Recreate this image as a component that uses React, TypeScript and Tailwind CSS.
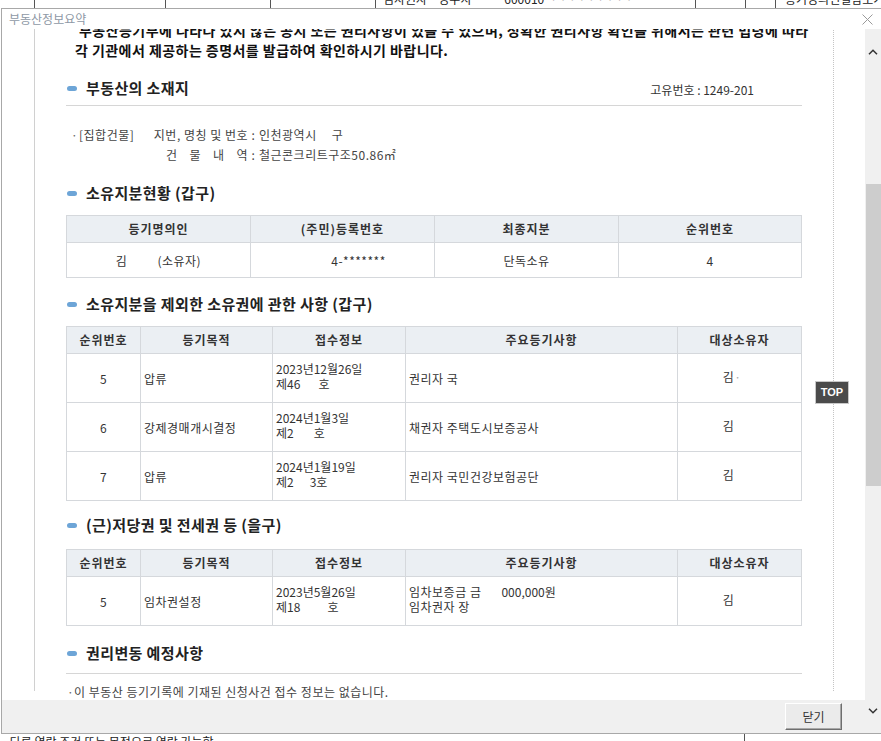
import React from "react";

const Chev = ({ up }: { up?: boolean }) => (
  <svg width="10" height="6" viewBox="0 0 10 6" className="block">
    <path d={up ? "M1 5.2 L5 1.2 L9 5.2" : "M1 0.8 L5 4.8 L9 0.8"} fill="none" stroke="#333" strokeWidth="1.5" />
  </svg>
);

function Heading({ children, right }: { children: React.ReactNode; right?: React.ReactNode }) {
  return (
    <div className="flex h-[20px] items-center">
      <span className="ml-[1px] h-[5px] w-[10px] shrink-0 rounded-full bg-[#6da5d7]" />
      <span className="ml-[9px] whitespace-nowrap text-[15px] font-bold leading-[20px] tracking-[0.4px] text-[#222]">
        {children}
      </span>
      {right}
    </div>
  );
}

const th =
  "flex h-[27px] items-center justify-center border-b border-r border-[#d5d8dc] bg-[#ebeff3] text-[12px] font-bold tracking-[1px] text-[#333]";
const td =
  "flex items-center border-b border-r border-[#d5d8dc] text-[12px] leading-[15px] tracking-[0.5px] text-[#333]";

type Row = {
  no: string;
  purpose: string;
  date: string;
  num: [string, number, string];
  info: React.ReactNode;
  owner: React.ReactNode;
};

function RightsTable({ rows }: { rows: Row[] }) {
  return (
    <div className="grid grid-cols-[74px_132px_133px_272px_124px] border-l border-t border-[#d5d8dc]">
      <div className={th}>순위번호</div>
      <div className={th}>등기목적</div>
      <div className={th}>접수정보</div>
      <div className={th}>주요등기사항</div>
      <div className={th}>대상소유자</div>
      {rows.map((r, i) => (
        <React.Fragment key={i}>
          <div className={`${td} h-[49px] justify-center`}>{r.no}</div>
          <div className={`${td} h-[49px] pl-[3px]`}>{r.purpose}</div>
          <div className={`${td} h-[49px] pl-[3px]`}>
            <div className="-mt-[4px] tracking-[0px]">
              <div>{r.date}</div>
              <div className="flex">
                <span>{r.num[0]}</span>
                <span className="inline-block" style={{ width: r.num[1] }} />
                <span>{r.num[2]}</span>
              </div>
            </div>
          </div>
          <div className={`${td} h-[49px] pl-[3px]`}>{r.info}</div>
          <div className={`${td} h-[49px] justify-center`}>{r.owner}</div>
        </React.Fragment>
      ))}
    </div>
  );
}

const Owner = ({ dot }: { dot?: boolean }) => (
  <span className="-mt-[4px] flex">
    <span>김</span>
    <span className="inline-block w-[22px] text-[#aaa]">{dot ? "·" : ""}</span>
  </span>
);

export default function App() {
  return (
    <div className="relative h-[741px] w-[881px] overflow-hidden bg-white font-['Noto_Sans_CJK_KR','Noto_Sans',sans-serif] text-[#333]">
      {/* background page strip (top) */}
      <div className="flex h-[8px] overflow-hidden text-[12px] leading-[16px] text-[#222]">
        <div className="w-[34px] shrink-0" />
        <div className="w-[131px] shrink-0 border-l border-[#555]" />
        <div className="w-[105px] shrink-0 border-l border-[#555]" />
        <div className="w-[105px] shrink-0 border-l border-[#555]" />
        <div className="w-[320px] shrink-0 border-l border-[#555] pl-[7px]">
          <div className="-mt-[9px] flex whitespace-nowrap">
            <span>임차권자</span>
            <span className="ml-[11px]">정수치</span>
            <span className="ml-[33px]">600010</span>
            <span className="ml-[6px] text-[#999]">· · · · · · · · ·</span>
          </div>
        </div>
        <div className="w-[50px] shrink-0 border-l border-[#555]" />
        <div className="w-[30px] shrink-0 border-l border-[#555]" />
        <div className="flex-1 border-l border-[#555] pl-[9px]">
          <div className="-mt-[9px] whitespace-nowrap">등기명의인열람보기</div>
        </div>
      </div>

      {/* dialog */}
      <div className="ml-[1px] flex h-[726px] flex-col border-b border-l border-t border-[#a8a8a8] bg-white">
        {/* title bar */}
        <div className="flex h-[20px] shrink-0 items-center">
          <span className="ml-[7px] text-[12px] leading-[20px] text-[#8e98a5]">부동산정보요약</span>
          <svg width="11" height="11" viewBox="0 0 11 11" className="ml-auto mr-[8px] mt-[1px]">
            <path d="M0.5 0.5 L10.5 10.5 M10.5 0.5 L0.5 10.5" stroke="#9a9a9a" strokeWidth="1" fill="none" />
          </svg>
        </div>

        {/* body */}
        <div className="flex min-h-0 flex-1">
          <div className="flex w-[863px] shrink-0 flex-col">
            {/* scrolled content */}
            <div className="h-[671px] shrink-0 overflow-hidden">
              <div className="ml-[32px] h-full w-[800px] border-l border-r border-[#d0d0d0] border-r-[#c4c4c4] [border-right-style:dotted] px-[31px]">
                <div className="-mt-[9px] text-[14px] font-bold leading-[20px] tracking-[0.45px] text-[#111]">
                  <div className="whitespace-nowrap pl-[13px]">
                    부동산등기부에 나타나 있지 않은 공시 또는 권리사항이 있을 수 있으며, 정확한 권리사항 확인을 위해서는 관련 법령에 따라
                  </div>
                  <div className="whitespace-nowrap pl-[9px]">
                    각 기관에서 제공하는 증명서를 발급하여 확인하시기 바랍니다.
                  </div>
                </div>

                <div className="mt-[18px]">
                  <Heading
                    right={
                      <span className="ml-auto mr-[48px] mt-[4px] text-[12px] leading-[20px] text-[#333]">
                        고유번호 : 1249-201
                      </span>
                    }
                  >
                    부동산의 소재지
                  </Heading>
                </div>
                <div className="mt-[7px] h-[1px] bg-[#d6d6d6]" />

                <div className="mt-[19px] text-[12px] leading-[20px] tracking-[0.5px] text-[#444]">
                  <div className="flex">
                    <div className="flex w-[81px] shrink-0 pl-[5px]">
                      <span className="w-[8px] text-[#666]">·</span>
                      <span>[집합건물]</span>
                    </div>
                    <div className="flex w-[101px] shrink-0 justify-end whitespace-nowrap">지번, 명칭 및 번호</div>
                    <div className="w-[11px] shrink-0 text-center">:</div>
                    <div className="flex">
                      <span>인천광역시</span>
                      <span className="inline-block w-[15px]" />
                      <span>구</span>
                    </div>
                  </div>
                  <div className="flex">
                    <div className="w-[81px] shrink-0" />
                    <div className="flex w-[101px] shrink-0 justify-end">
                      <div className="flex w-[82px] justify-between">
                        <span>건</span>
                        <span>물</span>
                        <span>내</span>
                        <span>역</span>
                      </div>
                    </div>
                    <div className="w-[11px] shrink-0 text-center">:</div>
                    <div>철근콘크리트구조50.86㎡</div>
                  </div>
                </div>

                <div className="mt-[18px]">
                  <Heading>소유지분현황 (갑구)</Heading>
                </div>
                <div className="mt-[12px] grid grid-cols-[184px_184px_184px_183px] border-l border-t border-[#d5d8dc]">
                  <div className={th}>등기명의인</div>
                  <div className={th}>(주민)등록번호</div>
                  <div className={th}>최종지분</div>
                  <div className={th}>순위번호</div>
                  <div className={`${td} h-[35px] justify-center`}>
                    <span className="flex">
                      <span>김</span>
                      <span className="inline-block w-[30px]" />
                      <span>(소유자)</span>
                    </span>
                  </div>
                  <div className={`${td} h-[35px] justify-center`}>
                    <span className="flex">
                      <span className="inline-block w-[32px]" />
                      <span>4-*******</span>
                    </span>
                  </div>
                  <div className={`${td} h-[35px] justify-center`}>단독소유</div>
                  <div className={`${td} h-[35px] justify-center`}>4</div>
                </div>

                <div className="mt-[16px]">
                  <Heading>소유지분을 제외한 소유권에 관한 사항 (갑구)</Heading>
                </div>
                <div className="mt-[12px]">
                  <RightsTable
                    rows={[
                      {
                        no: "5",
                        purpose: "압류",
                        date: "2023년12월26일",
                        num: ["제46", 18, "호"],
                        info: "권리자 국",
                        owner: <Owner dot />,
                      },
                      {
                        no: "6",
                        purpose: "강제경매개시결정",
                        date: "2024년1월3일",
                        num: ["제2", 20, "호"],
                        info: "채권자 주택도시보증공사",
                        owner: <Owner />,
                      },
                      {
                        no: "7",
                        purpose: "압류",
                        date: "2024년1월19일",
                        num: ["제2", 16, "3호"],
                        info: "권리자 국민건강보험공단",
                        owner: <Owner />,
                      },
                    ]}
                  />
                </div>

                <div className="mt-[14px]">
                  <Heading>(근)저당권 및 전세권 등 (을구)</Heading>
                </div>
                <div className="mt-[14px]">
                  <RightsTable
                    rows={[
                      {
                        no: "5",
                        purpose: "임차권설정",
                        date: "2023년5월26일",
                        num: ["제18", 27, "호"],
                        info: (
                          <div className="-mt-[4px]">
                            <div className="flex">
                              <span>임차보증금 금</span>
                              <span className="inline-block w-[20px]" />
                              <span className="tracking-[0px]">000,000원</span>
                            </div>
                            <div>임차권자 장</div>
                          </div>
                        ),
                        owner: <Owner />,
                      },
                    ]}
                  />
                </div>

                <div className="mt-[17px]">
                  <Heading>권리변동 예정사항</Heading>
                </div>
                <div className="mt-[10px] h-[1px] bg-[#d6d6d6]" />
                <div className="mt-[8px] flex text-[12px] leading-[20px] tracking-[0.5px] text-[#444]">
                  <span className="w-[8px] pl-[1px] text-[#666]">·</span>
                  <span>이 부동산 등기기록에 기재된 신청사건 접수 정보는 없습니다.</span>
                </div>
              </div>
            </div>

            {/* footer */}
            <div className="flex h-[33px] shrink-0 items-start justify-end bg-[#f0f0f0] pr-[23px] pt-[3px]">
              <button className="flex h-[27px] w-[57px] items-center justify-center border border-b-[#6e6e6e] border-l-white border-r-[#6e6e6e] border-t-white bg-[#ebebeb] text-[12px] text-[#333] shadow-[inset_-1px_-1px_0_#a8a8a8]">
                닫기
              </button>
            </div>
          </div>

          {/* scrollbar */}
          <div className="flex w-[16px] shrink-0 flex-col bg-[#f0f0f0]">
            <div className="flex h-[46px] shrink-0 justify-center">
              <div className="mt-[20px]">
                <Chev up />
              </div>
            </div>
            <div className="ml-[1px] mt-[109px] h-[302px] shrink-0 bg-[#cdcdcd]" />
            <div className="flex-1" />
            <div className="flex h-[33px] shrink-0 justify-center">
              <div className="mt-[8px]">
                <Chev />
              </div>
            </div>
          </div>
        </div>
      </div>

      {/* background page strip (bottom) */}
      <div className="flex h-[7px] overflow-hidden text-[12px] leading-[16px] text-[#222]">
        <div className="w-[744px] shrink-0 whitespace-nowrap pl-[3px]">·다른 열람 조건 또는 목적으로 열람 가능함.</div>
        <div className="flex-1 border-l border-[#555]" />
      </div>

      {/* TOP floating button */}
      <div className="absolute left-[815px] top-[381px] flex h-[23px] w-[34px] items-center justify-center border border-[#c8c8c8] bg-[#4b4b4b] font-['Liberation_Sans',Arial,sans-serif] text-[11px] font-bold text-white">
        TOP
      </div>
    </div>
  );
}
